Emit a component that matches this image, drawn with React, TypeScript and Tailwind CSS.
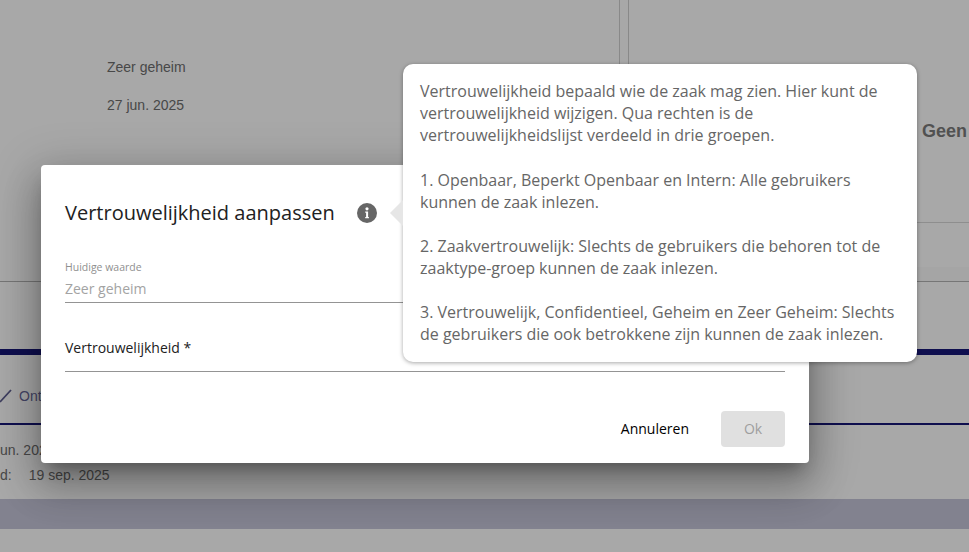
import React from "react";

const sans = "font-['Liberation_Sans',Arial,sans-serif]";
const open = "font-['Open_Sans',sans-serif]";

const InfoIcon = () => (
  <svg width="20" height="20" viewBox="0 0 20 20">
    <circle cx="10" cy="10" r="10" fill="#666666" />
    <circle cx="10" cy="5.8" r="1.6" fill="#fff" />
    <path d="M8.2 8.4h2.9v5.6h.8v1.3H8.2V14h.9V9.7h-.9z" fill="#fff" />
  </svg>
);

// page behind the dialog, dimmed by the overlay
const Background = () => (
  <div className={"flex h-[552px] w-[969px] flex-col overflow-hidden bg-white " + sans}>
    <div className="flex h-[282px] shrink-0 border-b border-[#b4b4b4]">
      <div className="w-[620px] shrink-0 border-r border-[#d0d0d0] pl-[107px] pt-[58px] text-sm leading-[18px] text-[#6e6e6e]">
        <div>Zeer geheim</div>
        <div className="mt-5">27 jun. 2025</div>
      </div>
      <div className="ml-2 flex flex-1 flex-col border-l border-[#d0d0d0]">
        <div className="flex h-[223px] shrink-0 overflow-hidden border-b border-[#d8d8d8] pl-[293px] pt-[121px]">
          <span className="whitespace-nowrap text-lg leading-5 font-bold text-[#7c7c7c]">Geen</span>
        </div>
        <div className="mt-[44px] flex-1 bg-[#fafafa]" />
      </div>
    </div>
    <div className="mt-[67px] h-[6px] shrink-0 bg-[#181878]" />
    <div className="flex h-[68px] shrink-0 items-center gap-[7px] pt-[14px] text-sm text-[#6a6a9c]">
      <svg width="12" height="14" viewBox="0 0 12 14" className="shrink-0">
        <path d="M0 13 11 1" stroke="#5f5f90" strokeWidth="1.8" fill="none" />
      </svg>
      <span>Ont</span>
    </div>
    <div className="h-[2px] shrink-0 bg-[#181878]" />
    <div className="mt-4 text-sm leading-[18px] text-[#6e6e6e]">un. 2025</div>
    <div className="mt-[7px] flex gap-[17px] text-sm leading-[18px] text-[#6e6e6e]">
      <span>d:</span>
      <span>19 sep. 2025</span>
    </div>
    <div className="mt-[15px] h-[30px] shrink-0 bg-[#c6c5d9]" />
  </div>
);

const Popover = () => (
  <div className="absolute left-[403px] top-[64px] h-[298px] w-[514px] rounded-[10px] bg-white px-[17px] pt-[16.3px] text-base leading-[22.1px] text-[#666666] shadow-[0_1px_4px_rgba(0,0,0,0.35)]">
    <div className="absolute left-[-13px] top-[136px] h-0 w-0 border-y-[13px] border-r-[13px] border-y-transparent border-r-[#e6e6e6]" />
    <p>
      Vertrouwelijkheid bepaald wie de zaak mag zien. Hier kunt de
      <br />
      vertrouwelijkheid wijzigen. Qua rechten is de
      <br />
      vertrouwelijkheidslijst verdeeld in drie groepen.
    </p>
    <p className="mt-[22.1px]">
      1. Openbaar, Beperkt Openbaar en Intern: Alle gebruikers
      <br />
      kunnen de zaak inlezen.
    </p>
    <p className="mt-[22.1px]">
      2. Zaakvertrouwelijk: Slechts de gebruikers die behoren tot de
      <br />
      zaaktype-groep kunnen de zaak inlezen.
    </p>
    <p className="mt-[22.1px]">
      3. Vertrouwelijk, Confidentieel, Geheim en Zeer Geheim: Slechts
      <br />
      de gebruikers die ook betrokkene zijn kunnen de zaak inlezen.
    </p>
  </div>
);

const Dialog = () => (
  <div className="absolute left-[41px] top-[165px] flex h-[298px] w-[768px] flex-col rounded bg-white px-6 shadow-[0_11px_15px_-7px_rgba(0,0,0,0.3),0_24px_38px_3px_rgba(0,0,0,0.2),0_9px_46px_8px_rgba(0,0,0,0.18)]">
    <div className="mt-[34px] flex h-7 items-center gap-[22px]">
      <h2 className="text-xl leading-7 font-normal text-[#212121]">Vertrouwelijkheid aanpassen</h2>
      <InfoIcon />
    </div>
    <div className="mt-[33px] h-[43px] border-b border-[#949494]">
      <div className="text-[10.5px] leading-[14px] text-[#8f8f8f]">Huidige waarde</div>
      <div className="mt-[5px] text-sm leading-5 text-[#a3a3a3]">Zeer geheim</div>
    </div>
    <div className="mt-[35px] h-[34px] border-b border-[#949494] text-sm leading-5 text-[#212121]">
      Vertrouwelijkheid *
    </div>
    <div className="mt-auto mb-[16px] flex items-center justify-end gap-8">
      <button className="text-sm leading-9 text-black">Annuleren</button>
      <button className="h-9 w-16 rounded bg-[#e0e0e0] text-sm text-[#9e9e9e]">Ok</button>
    </div>
  </div>
);

export default function App() {
  return (
    <div className="relative h-[552px] w-[969px] overflow-hidden">
      <Background />
      <div className="absolute inset-0 bg-black/[0.34]" />
      <div className={open}>
        <Dialog />
        <Popover />
      </div>
    </div>
  );
}
